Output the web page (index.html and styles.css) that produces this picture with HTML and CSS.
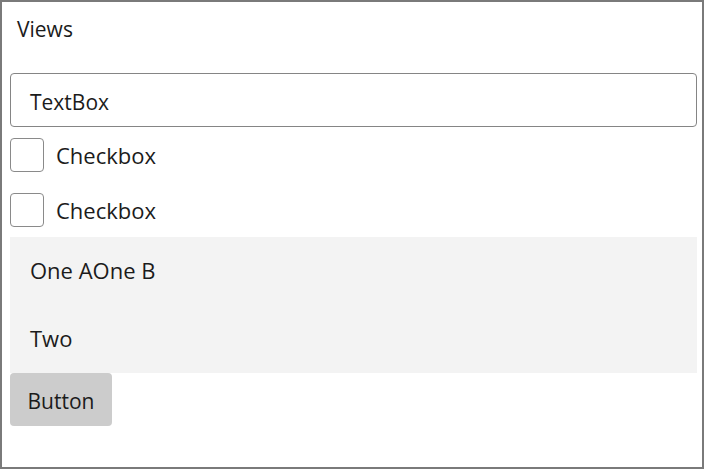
FILE: index.html
```html
<!DOCTYPE html>
<html>
<head>
<meta charset="utf-8">
<link rel="stylesheet" href="styles.css">
</head>
<body>
<div class="window">
  <div class="title">Views</div>
  <div class="content">
    <div class="textbox">TextBox</div>
    <label class="check"><span class="box"></span><span class="label">Checkbox</span></label>
    <label class="check"><span class="box"></span><span class="label">Checkbox</span></label>
    <div class="list">
      <div class="item">One AOne B</div>
      <div class="item">Two</div>
    </div>
    <div class="btn-row"><button class="button">Button</button></div>
  </div>
</div>
</body>
</html>
```

FILE: styles.css
```css
* { box-sizing: border-box; }
html, body { margin: 0; padding: 0; background: #ffffff; }
body {
  font-family: "Open Sans", "Noto Sans", sans-serif;
  color: #1b1b1b;
}
.window {
  width: 704px;
  height: 469px;
  border: 2px solid #7a7a7a;
  background: #ffffff;
  overflow: hidden;
}
.title {
  height: 71px;
  padding: 13px 0 0 15px;
  font-size: 21px;
  line-height: 28px;
}
.content {
  padding: 0 5px 0 8px;
  display: flex;
  flex-direction: column;
}
.textbox {
  height: 54px;
  border: 1px solid #858585;
  border-radius: 4px;
  padding: 14px 0 0 19px;
  font-size: 21px;
  line-height: 28px;
}
.check {
  height: 55px;
  display: flex;
  align-items: center;
}
.box {
  width: 34px;
  height: 34px;
  border: 1px solid #8a8a8a;
  border-radius: 4px;
  background: #ffffff;
  flex: none;
}
.label {
  margin-left: 12px;
  font-size: 22px;
  line-height: 28px;
  padding-top: 1px;
}
.list {
  background: #f3f3f3;
  display: flex;
  flex-direction: column;
}
.item {
  height: 68px;
  display: flex;
  align-items: center;
  padding: 0 0 2px 20px;
  font-size: 22px;
  line-height: 28px;
}
.btn-row { display: flex; }
.button {
  width: 102px;
  height: 53px;
  border: none;
  border-radius: 4px;
  background: #cccccc;
  color: #1b1b1b;
  font-family: "Open Sans", "Noto Sans", sans-serif;
  font-size: 21px;
  line-height: 28px;
  padding: 2px 0 0 0;
  text-align: center;
}
```
